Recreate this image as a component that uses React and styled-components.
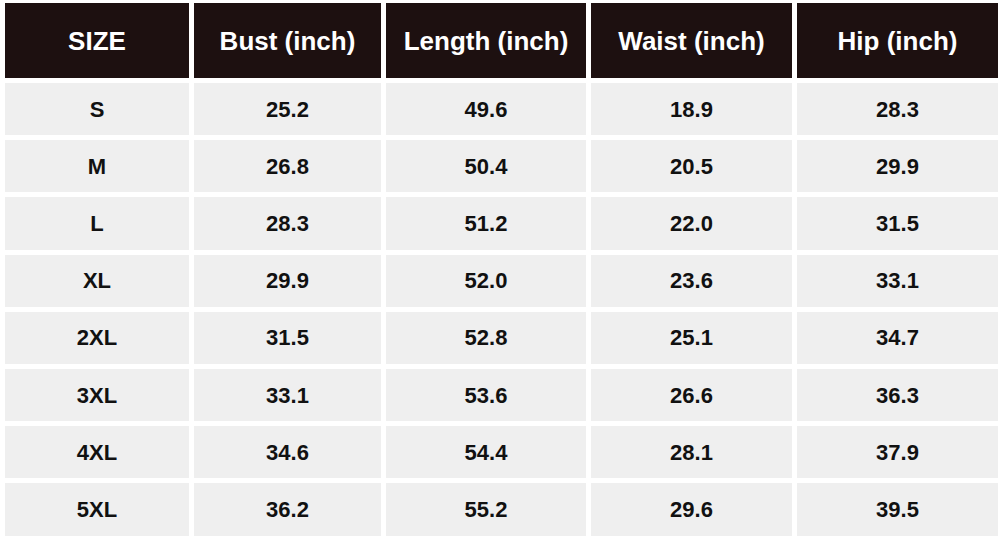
import styled, { createGlobalStyle } from "styled-components";

const GlobalStyle = createGlobalStyle`
  html, body {
    margin: 0;
    padding: 0;
    background: #fff;
  }
  body {
    font-family: "Liberation Sans", Arial, sans-serif;
  }
`;

const Page = styled.div`
  padding: 3px 2px 0 5px;
`;

const Table = styled.div`
  display: grid;
  grid-template-columns: 184px 187px 200px 201px 201px;
  grid-auto-rows: 52.2px;
  grid-template-rows: 75px;
  column-gap: 5px;
  row-gap: 5px;
`;

const HeadCell = styled.div`
  display: flex;
  align-items: center;
  justify-content: center;
  background: #1d1010;
  color: #fff;
  font-weight: 700;
  font-size: 26px;
  padding-top: 1px;
`;

const Cell = styled.div`
  display: flex;
  align-items: center;
  justify-content: center;
  background: #efefef;
  color: #111;
  font-weight: 700;
  font-size: 22px;
  padding-top: 1px;
`;

const columns = ["SIZE", "Bust (inch)", "Length (inch)", "Waist (inch)", "Hip (inch)"];

const rows = [
  ["S", "25.2", "49.6", "18.9", "28.3"],
  ["M", "26.8", "50.4", "20.5", "29.9"],
  ["L", "28.3", "51.2", "22.0", "31.5"],
  ["XL", "29.9", "52.0", "23.6", "33.1"],
  ["2XL", "31.5", "52.8", "25.1", "34.7"],
  ["3XL", "33.1", "53.6", "26.6", "36.3"],
  ["4XL", "34.6", "54.4", "28.1", "37.9"],
  ["5XL", "36.2", "55.2", "29.6", "39.5"],
];

const App = () => {
  return (
    <Page>
      <GlobalStyle />
      <Table>
        {columns.map((c) => (
          <HeadCell key={c}>{c}</HeadCell>
        ))}
        {rows.map((row) =>
          row.map((val, i) => <Cell key={row[0] + i}>{val}</Cell>)
        )}
      </Table>
    </Page>
  );
};

export default App;
